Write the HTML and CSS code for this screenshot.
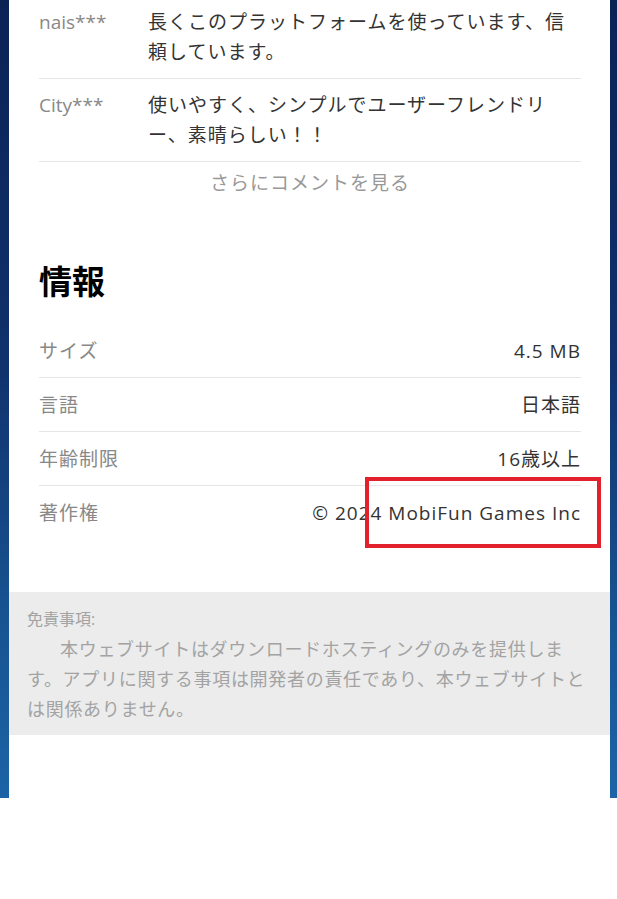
FILE: index.html
```html
<!DOCTYPE html>
<html lang="ja">
<head>
    <meta charset="UTF-8">
    <meta name="viewport" content="width=device-width, initial-scale=1.0">
    <title>MobiFun Games</title>
    <link rel="stylesheet" href="styles.css">
</head>
<body>

    <div class="page">
        <div class="card">

            <!-- COMMENTS -->
            <div class="comments">
                <div class="comment">
                    <span class="comment-name">nais***</span>
                    <p class="comment-text">長くこのプラットフォームを使っています、信頼しています。</p>
                </div>
                <div class="comment">
                    <span class="comment-name">City***</span>
                    <p class="comment-text">使いやすく、シンプルでユーザーフレンドリー、素晴らしい！！</p>
                </div>
                <a class="more-link">さらにコメントを見る</a>
            </div>

            <!-- INFO -->
            <h2 class="section-title">情報</h2>
            <div class="info-list">
                <div class="info-row">
                    <span class="info-label">サイズ</span>
                    <span class="info-value">4.5 MB</span>
                </div>
                <div class="info-row">
                    <span class="info-label">言語</span>
                    <span class="info-value">日本語</span>
                </div>
                <div class="info-row">
                    <span class="info-label">年齢制限</span>
                    <span class="info-value">16歳以上</span>
                </div>
                <div class="info-row">
                    <span class="info-label">著作権</span>
                    <span class="info-value">© 2024 MobiFun Games Inc</span>
                </div>
            </div>

            <!-- DISCLAIMER -->
            <div class="disclaimer">
                <div class="disclaimer-title">免責事項:</div>
                <p class="disclaimer-text">本ウェブサイトはダウンロードホスティングのみを提供します。アプリに関する事項は開発者の責任であり、本ウェブサイトとは関係ありません。</p>
            </div>

            <div class="highlight"></div>
        </div>
    </div>

</body>
</html>
```

FILE: styles.css
```css
html {
    background: #ffffff;
}

body {
    margin: 0;
    font-family: "Open Sans", "Noto Sans CJK JP", sans-serif;
    color: #333;
    background-color: #0f2d66;
    background-image:
        radial-gradient(circle, rgba(170, 220, 255, 0.55) 1px, transparent 1.5px),
        radial-gradient(circle, rgba(120, 190, 255, 0.35) 1px, transparent 1.5px),
        linear-gradient(180deg, #0b2255 0%, #10316c 45%, #17518f 75%, #1c64a6 100%);
    background-size: 41px 53px, 29px 67px, 100% 100%;
    background-position: 3px 11px, 6px 30px, 0 0;
}

.page {
    padding: 0 7px 0 9px;
}

.card {
    position: relative;
    background: #fff;
    margin-top: -4px;
    padding: 0 29px 63px 30px;
}

/* comments */
.comment {
    display: flex;
    padding: 11px 0;
    border-bottom: 1px solid #e6e6e6;
}

.comment-name {
    width: 109px;
    flex-shrink: 0;
    font-size: 19px;
    line-height: 30px;
    color: #888;
}

.comment-text {
    margin: 0;
    flex: 1;
    font-size: 19px;
    line-height: 30px;
    letter-spacing: 1px;
    color: #333;
}

.more-link {
    display: block;
    text-align: center;
    padding-top: 6px;
    font-size: 19px;
    line-height: 30px;
    letter-spacing: 1px;
    color: #999;
}

/* info */
.section-title {
    margin: 64px 0 22px;
    font-size: 33px;
    line-height: 40px;
    font-weight: bold;
    color: #000;
}

.info-row {
    display: flex;
    justify-content: space-between;
    padding: 12px 0 11px;
    border-bottom: 1px solid #e6e6e6;
    font-size: 19px;
    line-height: 30px;
    letter-spacing: 1px;
}

.info-row:last-child {
    border-bottom: none;
}

.info-label {
    color: #888;
}

.info-value {
    color: #333;
}

/* disclaimer */
.disclaimer {
    margin: 53px -29px 0 -30px;
    padding: 15px 23px 11px 18px;
    background: #ececec;
    color: #a3a3a3;
}

.disclaimer-title {
    font-size: 16px;
    line-height: 24px;
}

.disclaimer-text {
    margin: 3px 0 0;
    font-size: 18px;
    line-height: 30px;
    letter-spacing: 0.7px;
    text-indent: 33px;
}

.highlight {
    position: absolute;
    left: 356px;
    top: 481px;
    width: 228px;
    height: 63px;
    border: 4px solid #e3212d;
}
```
